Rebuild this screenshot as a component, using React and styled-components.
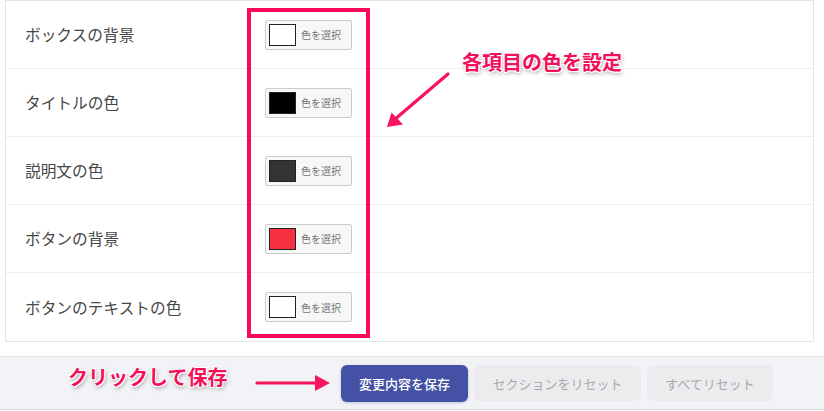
import styled, { createGlobalStyle } from "styled-components"

const GlobalStyle = createGlobalStyle`
    body{
        margin: 0;
        background-color: #ffffff;
        font-family: "Noto Sans CJK JP", "Noto Sans", sans-serif;
    }
`

const rows = [
    { label: 'ボックスの背景', color: '#ffffff' },
    { label: 'タイトルの色', color: '#000000' },
    { label: '説明文の色', color: '#333333' },
    { label: 'ボタンの背景', color: '#f72f43' },
    { label: 'ボタンのテキストの色', color: '#ffffff' },
]

export default function App(){
    return(
        <>
            <GlobalStyle />
            <Page>
                <Panel>
                    {rows.map((row) => (
                        <Row key={row.label}>
                            <Label>{row.label}</Label>
                            <PickerButton>
                                <Swatch $color={row.color} />
                                色を選択
                            </PickerButton>
                        </Row>
                    ))}
                </Panel>
                <Footer>
                    <SaveButton>変更内容を保存</SaveButton>
                    <ResetButton $width={167}>セクションをリセット</ResetButton>
                    <ResetButton $width={126}>すべてリセット</ResetButton>
                </Footer>

                <Highlight />
                <Note $left={462} $top={49}>各項目の色を設定</Note>
                <ArrowSvg $left={380} $top={65} width="75" height="70" viewBox="0 0 75 70">
                    <line x1="68" y1="9" x2="14" y2="55" stroke="#f8135c" strokeWidth="3.2" strokeLinecap="round" />
                    <polygon points="7,62 11.5,47.5 23,59.5" fill="#f8135c" />
                </ArrowSvg>
                <Note $left={68} $top={364}>クリックして保存</Note>
                <ArrowSvg $left={250} $top={370} width="85" height="26" viewBox="0 0 85 26">
                    <line x1="7" y1="13" x2="70" y2="13" stroke="#f8135c" strokeWidth="3.2" strokeLinecap="round" />
                    <polygon points="80,13 65,5 65,21" fill="#f8135c" />
                </ArrowSvg>
            </Page>
        </>
    )
}

const Page = styled.div`
    position: relative;
    width: 824px;
    height: 411px;
    overflow: hidden;
`

const Panel = styled.div`
    margin: 0 10px 0 5px;
    border: 1px solid #e4e4e4;
    background-color: #ffffff;
`

const Row = styled.div`
    box-sizing: border-box;
    height: 68px;
    padding-left: 19px;
    display: grid;
    grid-template-columns: 240px 1fr;
    align-items: center;
    border-bottom: 1px solid #eeeeee;
    &:last-child{
        border-bottom: none;
    }
`

const Label = styled.div`
    font-size: 15.7px;
    color: #474747;
    white-space: nowrap;
`

const PickerButton = styled.div`
    box-sizing: border-box;
    width: 87px;
    height: 30px;
    padding-left: 3px;
    display: flex;
    align-items: center;
    gap: 5px;
    background-color: #f7f7f7;
    border: 1px solid #cccccc;
    border-radius: 2px;
    font-size: 10px;
    color: #777777;
`

const Swatch = styled.span`
    box-sizing: border-box;
    width: 27px;
    height: 22px;
    border: 1px solid #222222;
    background-color: ${(p) => p.$color};
`

const Footer = styled.div`
    box-sizing: border-box;
    margin-top: 14px;
    height: 54px;
    padding: 7px 0 7px 341px;
    display: flex;
    align-items: center;
    gap: 6px;
    background-color: #f2f3f7;
    border-top: 1px solid #e2e3e9;
    border-bottom: 1px solid #dadade;
`

const SaveButton = styled.div`
    width: 127px;
    height: 37px;
    display: flex;
    justify-content: center;
    align-items: center;
    border-radius: 6px;
    background-color: #4451a5;
    color: #ffffff;
    font-size: 13px;
    font-weight: 500;
    box-shadow: 0px 1px 3px rgba(40, 50, 120, 0.25);
`

const ResetButton = styled.div`
    width: ${(p) => p.$width}px;
    height: 36px;
    display: flex;
    justify-content: center;
    align-items: center;
    border-radius: 6px;
    background-color: #ececef;
    color: #a9a9ab;
    font-size: 13px;
`

const Highlight = styled.div`
    position: absolute;
    left: 247px;
    top: 8px;
    width: 123px;
    height: 330px;
    box-sizing: border-box;
    border: 4px solid #fb0a5b;
    pointer-events: none;
`

const Note = styled.div`
    position: absolute;
    left: ${(p) => p.$left}px;
    top: ${(p) => p.$top}px;
    font-size: 20px;
    line-height: 26px;
    font-weight: 700;
    color: #f2105a;
    white-space: nowrap;
    text-shadow:
        0 0 1px #ffffff,
        0 0 2px #ffffff,
        1px 1px 0 #ffffff,
        -1px -1px 0 #ffffff,
        1px -1px 0 #ffffff,
        -1px 1px 0 #ffffff,
        1px 2px 4px rgba(0, 0, 0, 0.45);
`

const ArrowSvg = styled.svg`
    position: absolute;
    left: ${(p) => p.$left}px;
    top: ${(p) => p.$top}px;
    overflow: visible;
`
